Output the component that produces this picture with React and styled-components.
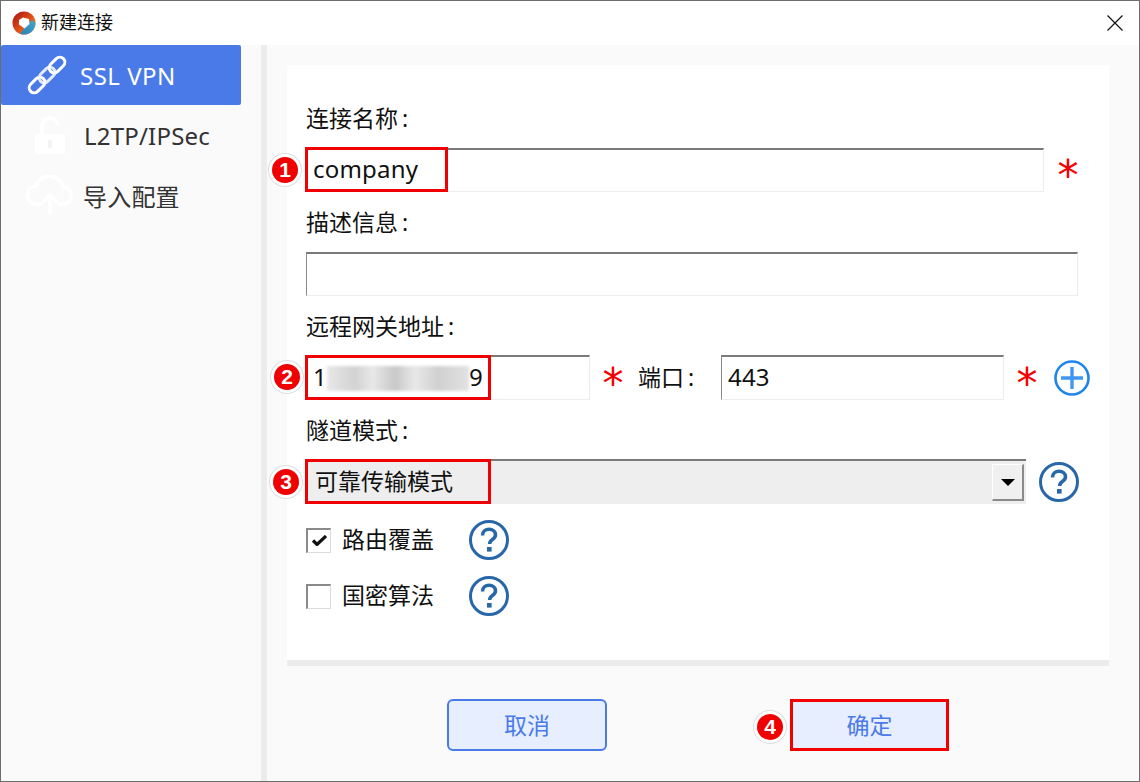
import React from 'react'
import styled, { createGlobalStyle } from 'styled-components'

const cjk = `"Noto Sans", "Noto Sans CJK SC", sans-serif`

const GlobalStyle = createGlobalStyle`
	html, body {
		margin: 0;
		padding: 0;
		background: #fff;
	}
	* {
		box-sizing: border-box;
	}
`

const LinkIcon = () => (
	<svg width="40" height="40" viewBox="0 0 40 40" fill="none" stroke="#fff" strokeWidth="3">
		<rect x="-9" y="-5" width="18" height="10" rx="5" transform="translate(10 30) rotate(-45)" />
		<rect x="-9" y="-5" width="18" height="10" rx="5" transform="translate(20 20) rotate(-45)" opacity="0.85" />
		<rect x="-9" y="-5" width="18" height="10" rx="5" transform="translate(30 10) rotate(-45)" />
	</svg>
)

const LockIcon = () => (
	<svg width="32" height="40" viewBox="0 0 32 40">
		<path d="M8 19V11a8 8 0 0 1 16 0" fill="none" stroke="#fff" strokeWidth="4" />
		<rect x="1" y="19" width="30" height="20" fill="#fff" />
		<rect x="14" y="25" width="4" height="8" fill="#f4f4f4" />
	</svg>
)

const CloudIcon = () => (
	<svg width="48" height="40" viewBox="0 0 48 40" fill="none" stroke="#fff" strokeWidth="3.5" strokeLinecap="round">
		<path d="M15 29H11a9 9 0 0 1-1-18 14 14 0 0 1 27 1 8.5 8.5 0 0 1 0 17h-4" />
		<path d="M24 39V21M17 27l7-7 7 7" />
	</svg>
)

const Logo = () => (
	<svg width="24" height="24" viewBox="0 0 24 24">
		<defs>
			<linearGradient id="ringA" x1="0" y1="0" x2="1" y2="1">
				<stop offset="0" stopColor="#a80d0d" />
				<stop offset="0.55" stopColor="#e0521a" />
				<stop offset="1" stopColor="#f2a23a" />
			</linearGradient>
			<linearGradient id="ringB" x1="1" y1="0" x2="0" y2="1">
				<stop offset="0" stopColor="#3fa9c9" />
				<stop offset="1" stopColor="#2c7fb8" />
			</linearGradient>
		</defs>
		<circle cx="12" cy="12" r="11.5" fill="url(#ringA)" />
		<path d="M23.5 12A11.5 11.5 0 0 1 8 22.8L14 15l6-6z" fill="url(#ringB)" />
		<path d="M11 6.5l6 1.5 .5 5-5 4.5L7 13.5V9z" fill="#fff" />
	</svg>
)

const PlusIcon = () => (
	<svg width="38" height="38" viewBox="0 0 38 38" fill="none">
		<circle cx="19" cy="19" r="16.5" stroke="#1f85ee" strokeWidth="2.6" />
		<path d="M19 8v22M8 19h22" stroke="#3f97f2" strokeWidth="3.4" />
	</svg>
)

const HelpIcon = () => (
	<HelpWrap>
		<svg width="42" height="42" viewBox="0 0 42 42" fill="none">
			<circle cx="21" cy="21" r="18.5" stroke="#2867a8" strokeWidth="3" />
			<path d="M14.5 16.5c0-4 3-6.2 6.6-6.2s6.4 2.2 6.4 5.4c0 2.6-1.6 3.8-3.4 5-1.6 1.1-2.4 2-2.4 4.3" stroke="#2867a8" strokeWidth="3.6" />
			<rect x="19" y="28" width="4.6" height="4.6" fill="#2867a8" />
		</svg>
	</HelpWrap>
)

const App = () => {
	return (
		<>
			<GlobalStyle />
			<Window>
				<TitleBar>
					<Logo />
					<Title>新建连接</Title>
					<CloseBtn>
						<svg width="16" height="16" viewBox="0 0 16 16" stroke="#111" strokeWidth="1.2">
							<path d="M0.5 0.5l15 15M15.5 0.5l-15 15" />
						</svg>
					</CloseBtn>
				</TitleBar>

				<Body>
					<Sidebar>
						<NavItem $active>
							<NavIcon $left={26}><LinkIcon /></NavIcon>
							SSL VPN
						</NavItem>
						<NavItem>
							<NavIcon $left={33} $text={83}><LockIcon /></NavIcon>
							L2TP/IPSec
						</NavItem>
						<NavItem>
							<NavIcon $left={25} $text={82}><CloudIcon /></NavIcon>
							导入配置
						</NavItem>
					</Sidebar>
					<Splitter />

					<Main>
						<Panel>
							<Label>连接名称<Colon>:</Colon></Label>
							<Row>
								<Field $width={738}>
									<Input>company</Input>
									<Marker $width={143} $top={-1} />
									<Badge $left={-34} $top={9}>1</Badge>
								</Field>
								<Star $left={14}>*</Star>
							</Row>

							<Label>描述信息<Colon>:</Colon></Label>
							<Row>
								<Field $width={772}>
									<Input />
								</Field>
							</Row>

							<Label $tight>远程网关地址<Colon>:</Colon></Label>
							<Row>
								<Field $width={284}>
									<Input $tall>
										1<Blurred />9
									</Input>
									<Marker $width={186} $top={0} />
									<Badge $left={-32} $top={9}>2</Badge>
								</Field>
								<Star $left={13}>*</Star>
								<PortLabel>端口<Colon>:</Colon></PortLabel>
								<Field $width={283}>
									<Input $tall>443</Input>
								</Field>
								<Star $left={13}>*</Star>
								<PlusWrap><PlusIcon /></PlusWrap>
							</Row>

							<Label $tight>隧道模式<Colon>:</Colon></Label>
							<Row>
								<Field $width={720}>
									<Select>
										<SelectText>可靠传输模式</SelectText>
										<Arrow>
											<ArrowHead />
										</Arrow>
									</Select>
									<Marker $width={186} $top={0} />
									<Badge $left={-33} $top={10}>3</Badge>
								</Field>
								<HelpSlot $left={12}><HelpIcon /></HelpSlot>
							</Row>

							<CheckRow>
								<Check>
									<svg width="15" height="11" viewBox="0 0 15 11" fill="none" stroke="#111" strokeWidth="3.2">
										<path d="M1 5.5l4 4L14 1" />
									</svg>
								</Check>
								<CheckText>路由覆盖</CheckText>
								<HelpIcon />
							</CheckRow>
							<CheckRow>
								<Check />
								<CheckText>国密算法</CheckText>
								<HelpIcon />
							</CheckRow>
						</Panel>

						<Footer>
							<Button>取消</Button>
							<OkWrap>
								<Button $marked>确定</Button>
								<Badge $left={-33} $top={15}>4</Badge>
							</OkWrap>
						</Footer>
					</Main>
				</Body>
			</Window>
		</>
	)
}

export default App

const Window = styled.div`
	width: 1140px;
	height: 782px;
	border: 1px solid #6d6d6d;
	background: #fafafa;
	display: flex;
	flex-direction: column;
	font-family: ${cjk};
	overflow: hidden;
`

const TitleBar = styled.div`
	height: 44px;
	flex: none;
	background: #fff;
	display: flex;
	align-items: center;
	padding: 0 0 0 11px;
	position: relative;
`

const Title = styled.div`
	margin-left: 5px;
	padding-bottom: 4px;
	font-size: 18px;
	color: #111;
`

const CloseBtn = styled.div`
	margin-left: auto;
	margin-right: 16px;
	width: 16px;
	height: 16px;
	display: flex;
`

const Body = styled.div`
	flex: 1;
	display: flex;
	min-height: 0;
`

const Sidebar = styled.nav`
	width: 260px;
	flex: none;
`

const NavItem = styled.div`
	width: 240px;
	height: 60px;
	display: flex;
	align-items: center;
	font-size: 24px;
	letter-spacing: ${p => (p.$active ? 0.5 : 0.2)}px;
	color: ${p => (p.$active ? '#fff' : '#333')};
	background: ${p => (p.$active ? '#4a7ae8' : 'transparent')};
	border-radius: 2px;
`

const NavIcon = styled.span`
	width: ${p => (p.$text || 79)}px;
	padding-left: ${p => p.$left}px;
	flex: none;
	display: flex;
	align-items: center;
`

const Splitter = styled.div`
	width: 6px;
	flex: none;
	background: #ececec;
`

const Main = styled.div`
	flex: 1;
	display: flex;
	flex-direction: column;
	padding: 20px 30px 0 20px;
	min-width: 0;
`

const Panel = styled.div`
	height: 595px;
	flex: none;
	background: #fff;
	padding: 39px 0 0 19px;
`

const Label = styled.div`
	height: 30px;
	line-height: 28px;
	font-size: 23px;
	color: #111;
	margin-bottom: ${p => (p.$tight ? 13 : 14)}px;
`

const Colon = styled.span`
	margin-left: 4px;
`

const Row = styled.div`
	display: flex;
	align-items: center;
	margin-bottom: 16px;
`

const Field = styled.div`
	position: relative;
	width: ${p => p.$width}px;
	flex: none;
`

const Input = styled.div`
	height: ${p => (p.$tall ? 45 : 44)}px;
	border-top: 2px solid #7a7a7a;
	border-left: 1px solid #8a8a8a;
	border-right: 1px solid #ececec;
	border-bottom: 1px solid #ececec;
	background: #fff;
	padding: 0 0 4px 6px;
	display: flex;
	align-items: center;
	font-size: 24px;
	letter-spacing: 0.2px;
	color: #111;
`

const Blurred = styled.span`
	width: 142px;
	height: 25px;
	margin-top: 4px;
	background: linear-gradient(90deg, #e8e8e8, #d2d2d2 20%, #e8e8e8 32%, #c8c8c8 48%, #e8e8e8 62%, #d0d0d0 78%, #e2e2e2);
	filter: blur(1.5px);
`

const Marker = styled.div`
	position: absolute;
	left: -1px;
	top: ${p => p.$top}px;
	bottom: 0;
	width: ${p => p.$width}px;
	border: 3px solid #f00000;
	pointer-events: none;
`

const Badge = styled.span`
	position: absolute;
	left: ${p => p.$left}px;
	top: ${p => p.$top}px;
	width: 26px;
	height: 26px;
	border-radius: 50%;
	background: #f00000;
	box-shadow: 0 0 0 3px #fff, 0 0 0 4px #dedede;
	color: #fff;
	font-family: "Liberation Sans", sans-serif;
	font-size: 21px;
	font-weight: 700;
	line-height: 26px;
	text-align: center;
`

const Star = styled.span`
	width: 20px;
	height: 44px;
	margin-left: ${p => p.$left}px;
	flex: none;
	color: #f50000;
	font-family: "DejaVu Sans", sans-serif;
	font-size: 42px;
	line-height: 56px;
	text-align: center;
	display: flex;
	justify-content: center;
`

const PortLabel = styled.span`
	width: 98px;
	padding: 0 0 4px 15px;
	flex: none;
	font-size: 23px;
	color: #111;
`

const PlusWrap = styled.span`
	margin-left: 16px;
	display: flex;
`

const Select = styled.div`
	height: 45px;
	border-top: 2px solid #7a7a7a;
	background: #eeeeee;
	padding: 0 0 0 9px;
	display: flex;
	align-items: center;
	font-size: 23px;
	color: #111;
	position: relative;
`

const SelectText = styled.span`
	padding-bottom: 5px;
`

const Arrow = styled.span`
	margin-left: auto;
	margin-right: 2px;
	width: 32px;
	height: 37px;
	border-top: 1px solid #fff;
	border-left: 1px solid #fff;
	border-right: 2px solid #8a8a8a;
	border-bottom: 2px solid #8a8a8a;
	background: #f0f0f0;
	display: flex;
	align-items: center;
	justify-content: center;
`

const ArrowHead = styled.i`
	width: 0;
	height: 0;
	border-left: 7px solid transparent;
	border-right: 7px solid transparent;
	border-top: 7px solid #000;
`

const HelpSlot = styled.span`
	margin-left: ${p => p.$left}px;
	display: flex;
`

const HelpWrap = styled.span`
	display: flex;
	flex: none;
`

const CheckRow = styled.div`
	height: 40px;
	margin-bottom: 16px;
	display: flex;
	align-items: center;
`

const Check = styled.span`
	width: 25px;
	height: 25px;
	flex: none;
	border-top: 2px solid #8a8a8a;
	border-left: 2px solid #8a8a8a;
	border-right: 1px solid #dcdcdc;
	border-bottom: 1px solid #dcdcdc;
	background: #fff;
	display: flex;
	align-items: center;
	justify-content: center;
`

const CheckText = styled.span`
	width: 137px;
	padding: 0 0 4px 11px;
	flex: none;
	font-size: 23px;
	color: #111;
`

const Footer = styled.div`
	flex: 1;
	border-top: 6px solid #ececec;
	padding: 33px 0 0 160px;
	display: flex;
	gap: 183px;
	align-items: flex-start;
`

const OkWrap = styled.div`
	position: relative;
`

const Button = styled.button`
	width: ${p => (p.$marked ? 159 : 160)}px;
	height: 52px;
	background: #e6eeff;
	border: ${p => (p.$marked ? '3px solid #f00000' : '2px solid #4a7ae8')};
	border-radius: ${p => (p.$marked ? 0 : 6)}px;
	color: #4a7ae8;
	font-family: ${cjk};
	font-size: 23px;
	padding: 0 0 2px;
`
